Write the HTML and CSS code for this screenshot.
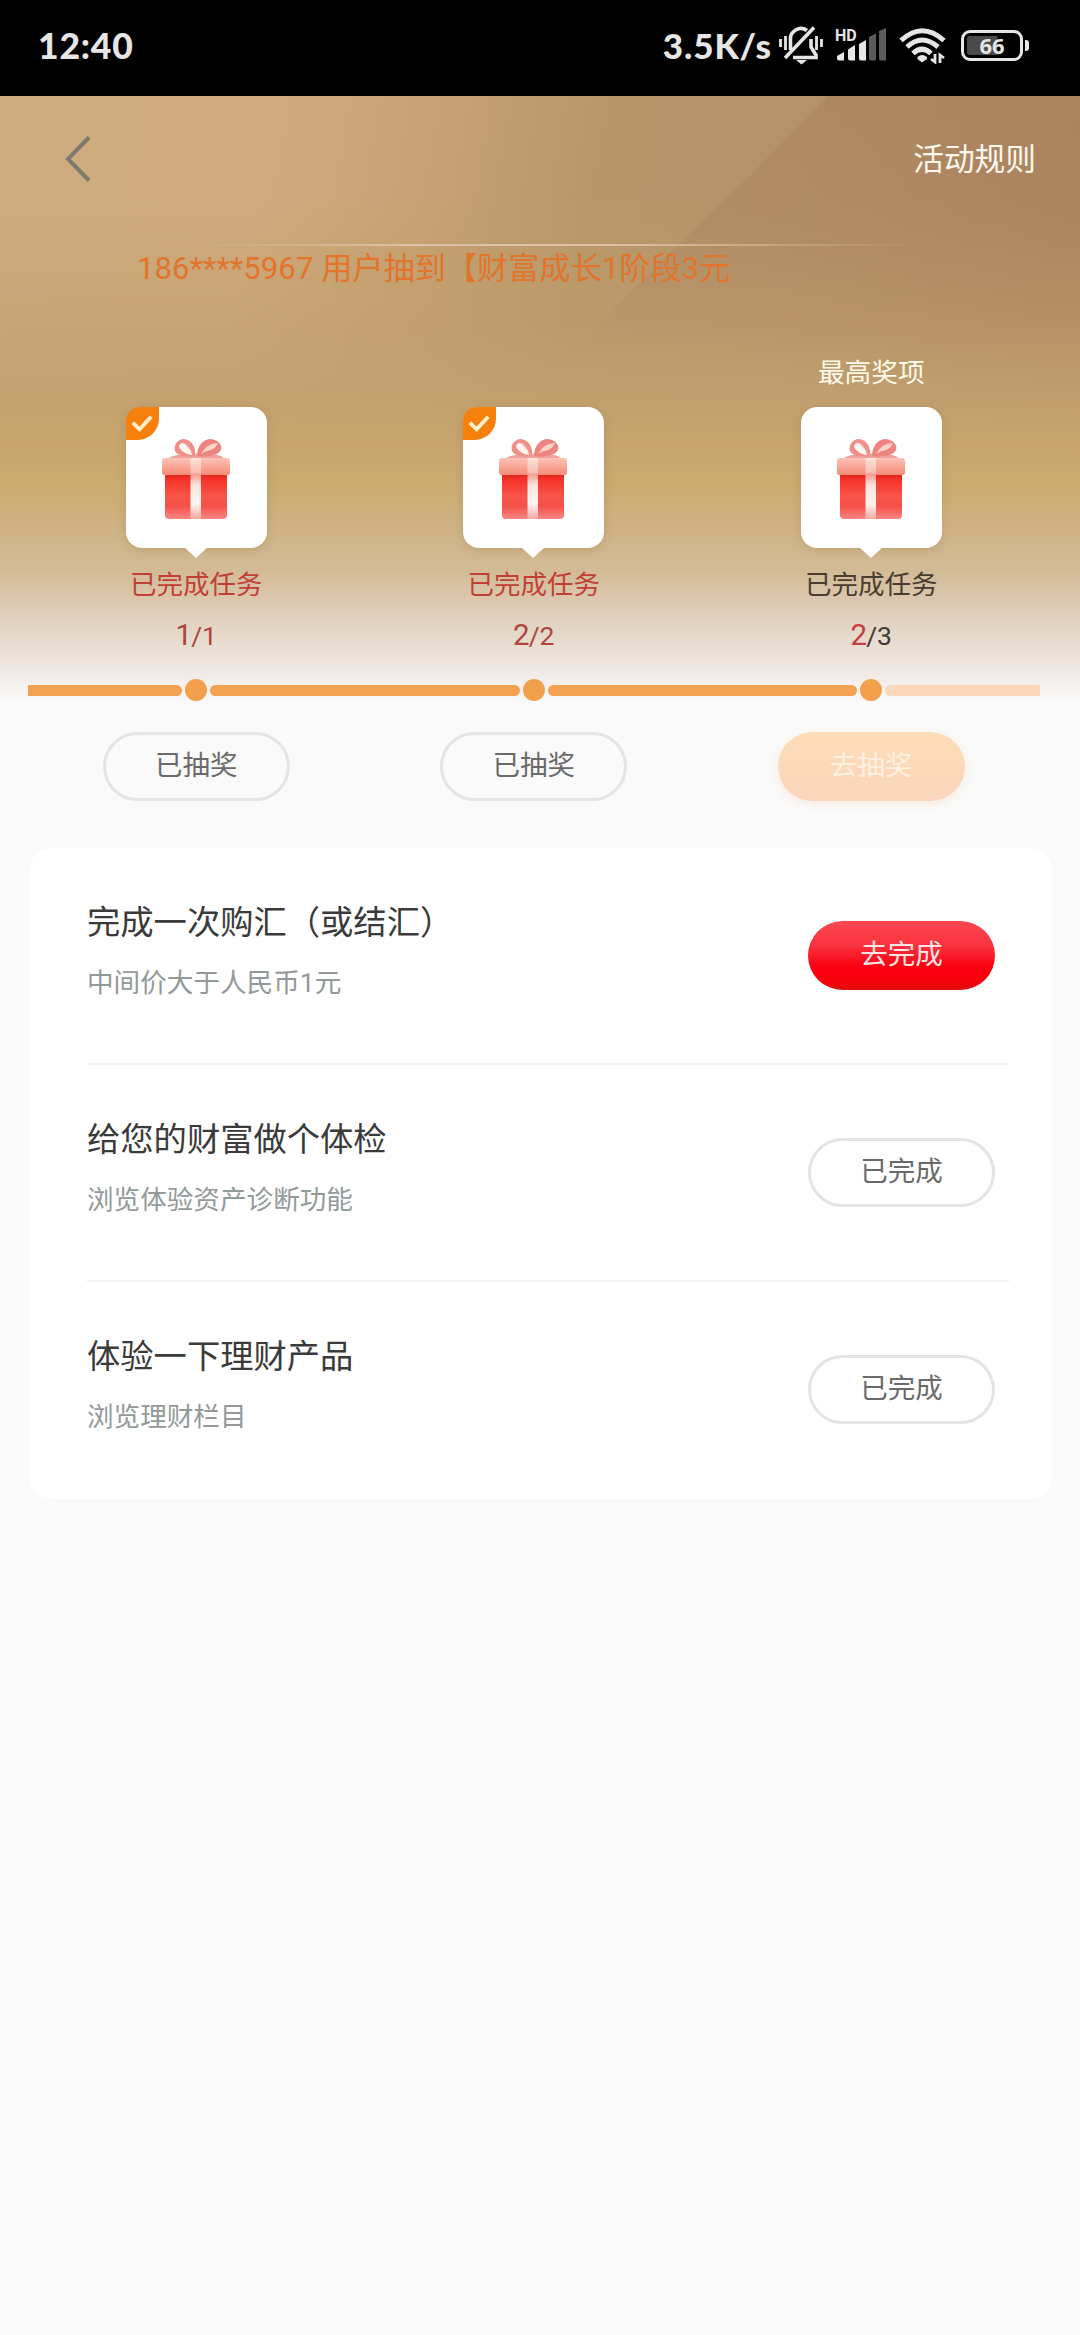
FILE: index.html
```html
<!DOCTYPE html>
<html lang="zh-CN">
<head>
<meta charset="utf-8">
<title>财富成长</title>
<link rel="stylesheet" href="styles.css">
</head>
<body>
<svg class="defs" width="0" height="0" aria-hidden="true">
  <defs>
    <linearGradient id="lid" x1="0" y1="0" x2="0" y2="1"><stop offset="0" stop-color="#fbc3b5"/><stop offset="1" stop-color="#f78b79"/></linearGradient>
    <linearGradient id="body" x1="0" y1="0" x2="0" y2="1"><stop offset="0" stop-color="#f2291f"/><stop offset=".5" stop-color="#f9564b"/><stop offset=".7" stop-color="#f45048"/><stop offset="1" stop-color="#f98682"/></linearGradient>
    <linearGradient id="ribbon" x1="0" y1="0" x2="0" y2="1"><stop offset="0" stop-color="#fde3da"/><stop offset=".24" stop-color="#f8bdb0"/><stop offset=".27" stop-color="#f79c90"/><stop offset=".45" stop-color="#fde4df"/><stop offset=".75" stop-color="#fff4f0"/><stop offset="1" stop-color="#f7a9a2"/></linearGradient>
    <symbol id="gift" viewBox="0 0 70 82">
      <path d="M9 18Q22 14 33 15Q48 12 62 18L60 21H10Z" fill="#f0a09a"/>
      <path d="M34 17C29 18 17 18 14 12C12 6 17 0 23 0C31 1 35 8 34 17Z" fill="#ee8f88"/>
      <path d="M31 16C26 16 20 12 18 8C18 4 22 3 25 5C28 8 30 11 31 16Z" fill="#fff6f2"/>
      <path d="M20 3Q27 4 32 15Q25 5 20 3Z" fill="#f9b9ad"/>
      <path d="M36 17C41 18 56 18 60 11C62 5 56 1 50 0C42 0 36 7 36 17Z" fill="#ee8480"/>
      <path d="M40 15Q46 4 57 4Q55 9 50 11Q44 12 40 15Z" fill="#fbd5ca"/>
      <path d="M4 36H66V76Q66 80 62 80H8Q4 80 4 76Z" fill="url(#body)"/>
      <path d="M4 35H66V38H4Z" fill="#d92a22" opacity=".6"/>
      <path d="M4 19H66Q69 19 69 22V34Q69 36 66 36H3Q1 36 1 34V22Q1 19 4 19Z" fill="url(#lid)"/>
      <path d="M29.500 19H40V80H29.500Z" fill="url(#ribbon)"/>
    </symbol>
    <symbol id="tick" viewBox="0 0 34 34">
      <path d="M15 0H34V12A22 22 0 0 1 12 34H0V15A15 15 0 0 1 15 0Z" fill="#f77f0c"/>
      <path d="M7 16L14 23L26 10" fill="none" stroke="#ffefc9" stroke-width="4"/>
    </symbol>
  </defs>
</svg>

<header class="status">
  <span class="clock">12:40</span>
  <div class="indicators">
    <span class="speed">3.5K/s</span>
    <svg class="mute" width="46" height="40" viewBox="0 0 46 40" fill="none" stroke="#e6e6e6" stroke-width="3.600">
      <path d="M12.500 25V15A10.500 10.500 0 0 1 29 5.500M33 14V22L38 30V32.500H15"/>
      <path d="M36 2.500L7 33"/>
      <path d="M18 35H29L23.500 39.500Z" fill="#e6e6e6" stroke="none"/>
      <path d="M2.500 14V22M7.500 11V25M38.500 11V25M43.500 14V22" stroke-width="2.800"/>
    </svg>
    <svg class="signal" width="52" height="38" viewBox="0 0 52 38">
      <text class="hd" x="0" y="15.500">HD</text>
      <path d="M2 31L9 27V35.500H4Q2 35.500 2 33.500ZM13 24.500L20 20V35.500H15Q13 35.500 13 33.500ZM24 19L31 15V35.500H26Q24 35.500 24 33.500Z" fill="#e6e6e6"/>
      <path d="M34 12L41 8.500V35.500H36Q34 35.500 34 33.500ZM44 6L51 3V35.500H46Q44 35.500 44 33.500Z" fill="#5b5b5b"/>
    </svg>
    <svg class="wifi" width="48" height="36" viewBox="0 0 48 36" fill="none" stroke="#e6e6e6" stroke-width="5">
      <path d="M2 12.500Q23 -7 45 12.500M8 19Q23 5 39 19M14 25.500Q23 17 32 25.500"/>
      <path d="M18.500 29Q23 25 28 29V31L23 34.500L18.500 31Z" fill="#e6e6e6" stroke="none"/>
      <path d="M36 26V34L32 31M41 35V27L45 30" stroke-width="2.800"/>
    </svg>
    <div class="battery"><span class="cell">66</span><i class="cap"></i></div>
  </div>
</header>

<main class="page">
  <section class="hero">
    <svg class="sheen" width="1080" height="260" viewBox="0 0 1080 260" aria-hidden="true">
      <defs><linearGradient id="fade" x1="0" y1="0" x2="0" y2="1"><stop offset="0" stop-color="#a9815b" stop-opacity=".6"/><stop offset=".5" stop-color="#a9815b" stop-opacity=".4"/><stop offset="1" stop-color="#a9815b" stop-opacity="0"/></linearGradient></defs>
      <path d="M829 0Q745 85 680 147Q620 205 570 260H1080V0Z" fill="url(#fade)"/>
    </svg>
    <nav class="nav">
      <svg width="26" height="48" viewBox="0 0 26 48"><path d="M24 2.500L3 24L24 45.500" fill="none" stroke="#7e7b6d" stroke-width="4"/></svg>
      <span class="rules">活动规则</span>
    </nav>
    <div class="notice">186****5967 用户抽到【财富成长1阶段3元</div>

    <div class="stages">
      <div class="stage done">
        <span class="top"></span>
        <div class="bubble"><svg class="badge"><use href="#tick"/></svg><svg class="gift"><use href="#gift"/></svg></div>
        <span class="label">已完成任务</span>
        <span class="count"><b>1</b>/1</span>
      </div>
      <div class="stage done">
        <span class="top"></span>
        <div class="bubble"><svg class="badge"><use href="#tick"/></svg><svg class="gift"><use href="#gift"/></svg></div>
        <span class="label">已完成任务</span>
        <span class="count"><b>2</b>/2</span>
      </div>
      <div class="stage">
        <span class="top">最高奖项</span>
        <div class="bubble"><svg class="gift"><use href="#gift"/></svg></div>
        <span class="label">已完成任务</span>
        <span class="count"><b>2</b>/3</span>
      </div>
    </div>

    <div class="track">
      <i class="seg first"></i><i class="dot"></i><i class="seg"></i><i class="dot"></i><i class="seg"></i><i class="dot"></i><i class="seg last"></i>
    </div>
  </section>

  <div class="draws">
    <span class="pill">已抽奖</span>
    <span class="pill">已抽奖</span>
    <span class="pill draw">去抽奖</span>
  </div>

  <section class="card">
    <div class="task">
      <div class="info"><h2>完成一次购汇（或结汇）</h2><p>中间价大于人民币1元</p></div>
      <span class="pill go">去完成</span>
    </div>
    <div class="task">
      <div class="info"><h2>给您的财富做个体检</h2><p>浏览体验资产诊断功能</p></div>
      <span class="pill">已完成</span>
    </div>
    <div class="task">
      <div class="info"><h2>体验一下理财产品</h2><p>浏览理财栏目</p></div>
      <span class="pill">已完成</span>
    </div>
  </section>
</main>
</body>
</html>
```
FILE: styles.css
```css
* { box-sizing: border-box; }
body {
  margin: 0;
  width: 1080px;
  min-height: 2335px;
  background: #fafafa;
  font-family: Roboto, "Noto Sans CJK SC", sans-serif;
  color: #333;
}
.defs { position: absolute; }

.status {
  display: flex;
  justify-content: space-between;
  height: 96px;
  padding: 0 51px 0 38px;
  background: #000;
  color: #e6e6e6;
  font-family: Lato, sans-serif;
  font-weight: 900;
}
.clock { font-size: 35.500px; line-height: 91px; letter-spacing: .8px; }
.indicators { display: flex; align-items: flex-start; }
.speed { font-size: 35px; line-height: 91px; letter-spacing: .9px; margin-right: 6px; }
.mute { margin: 25px 11px 0 0; }
.signal { margin: 25px 12px 0 0; }
.hd { font: 700 16px Roboto, sans-serif; fill: #e6e6e6; }
.wifi { margin: 28px 14px 0 0; }
.battery { display: flex; align-items: center; gap: 2px; margin-top: 30px; }
.cell {
  width: 62px;
  height: 31px;
  border: 3.500px solid #e6e6e6;
  border-radius: 9px;
  background: linear-gradient(90deg, #4a4a4a 0 30px, #000 31px) content-box;
  padding: 3px;
  text-align: center;
  font: 700 22px/18px "Noto Sans", sans-serif;
}
.cap { width: 4px; height: 11px; border-radius: 0 3px 3px 0; background: #e6e6e6; }

.hero {
  position: relative;
  height: 606px;
  background:
    linear-gradient(180deg, rgba(190,155,105,0) 100px, rgba(192,157,106,.5) 230px, rgba(194,160,110,.85) 290px, #c7a56d 350px, #caac70 391px, #cfb283 431px, #d3bb98 476px, #dfcdb9 516px, #e7dccf 546px, #f0eae6 576px, #fafafa 606px),
    linear-gradient(100deg, #cfac80 0, #cfab7e 270px, #c6a173 440px, #b7976a 600px, #b4926a 800px, #ae8760 1080px);
}
.sheen { position: absolute; left: 0; top: 0; }
.nav {
  position: relative;
  display: flex;
  justify-content: space-between;
  align-items: center;
  height: 125px;
  padding: 0 44px 0 65px;
}
.rules { margin-top: -5px; font-size: 30.700px; color: #fff9ef; }
.notice {
  position: relative;
  height: 80px;
  margin-top: 23px;
  padding: 2px 0 0 137px;
  font-size: 31.200px;
  line-height: 46px;
  color: #e2742b;
  white-space: nowrap;
  background: linear-gradient(90deg, transparent 190px, #dcc5a6 420px, #d6bd9e 640px, transparent 920px) 0 0 / 100% 2px no-repeat;
}
.stages {
  position: relative;
  display: grid;
  grid-template-columns: repeat(3, 337.500px);
  margin-left: 27.500px;
}
.stage { display: flex; flex-direction: column; align-items: center; }
.top { height: 83px; padding-top: 29px; font-size: 26.700px; line-height: 40px; color: #fffae9; }
.bubble {
  position: relative;
  width: 141px;
  height: 141px;
  padding: 32px 35px;
  border-radius: 16px;
  background: #fff;
  box-shadow: 0 2px 8px rgba(130,100,60,.25);
}
.bubble::after {
  content: "";
  position: absolute;
  left: 58px;
  bottom: -10px;
  border: 12px solid transparent;
  border-top: 11px solid #fff;
  border-bottom: 0;
}
.gift { display: block; width: 70px; height: 82px; }
.badge { position: absolute; left: 0; top: 0; width: 33px; height: 33px; }
.label { margin-top: 17px; font-size: 26.500px; line-height: 40px; color: #4a3c2e; }
.count { margin-top: 10px; font-size: 26.500px; line-height: 40px; color: #3f3a37; }
.count b { font-weight: 400; font-size: 29.500px; letter-spacing: -1px; color: #c93c42; }
.done .label { color: #c23f35; }
.done .count, .done b { color: #b0443e; }
.track {
  position: absolute;
  left: 28px;
  top: 583px;
  width: 1012px;
  display: flex;
  align-items: center;
  gap: 3px;
}
.seg { flex: 0 0 309.500px; height: 11px; border-radius: 6px; background: #f3a251; }
.first { flex-basis: 154px; border-radius: 0 6px 6px 0; }
.last { flex-basis: 155px; border-radius: 6px 0 0 6px; background: #fad6ba; }
.dot { flex: 0 0 22px; height: 22px; border-radius: 50%; background: #f3a04c; }

.draws {
  display: grid;
  grid-template-columns: repeat(3, 337.500px);
  justify-items: center;
  padding: 30px 0 0 27.500px;
}
.pill {
  display: block;
  width: 187px;
  height: 69px;
  border: 3px solid #e4e4e4;
  border-radius: 35px;
  font-size: 27.500px;
  line-height: 62px;
  text-align: center;
  color: #6a6a6a;
}
.draw { border: 0; line-height: 68px; color: #fff1e0; background: linear-gradient(#ffddb7, #fad5bb); box-shadow: 0 3px 10px #f8eadf; }

.card { margin: 47px 28px 0 30px; height: 651px; border-radius: 22px; background: #fff; padding: 0 43px 0 57px; }
.task { display: flex; justify-content: space-between; height: 217px; border-bottom: 2px solid #f2f2f2; }
.task:last-child { border: 0; }
.task .pill { margin: 72.500px 14px 0 0; }
.info { padding: 50px 0 0; }
h2 { margin: 0; font-weight: 400; font-size: 33.300px; line-height: 50px; color: #3a3a3a; }
p { margin: 15px 0 0; font-size: 26.600px; line-height: 40px; color: #939999; }
.task .go { border: 0; line-height: 67px; color: #ffe5e5; background: linear-gradient(#fa4850, #fb3340 35%, #fa0212 65%, #f8000c 85%, #df1010); }
```
